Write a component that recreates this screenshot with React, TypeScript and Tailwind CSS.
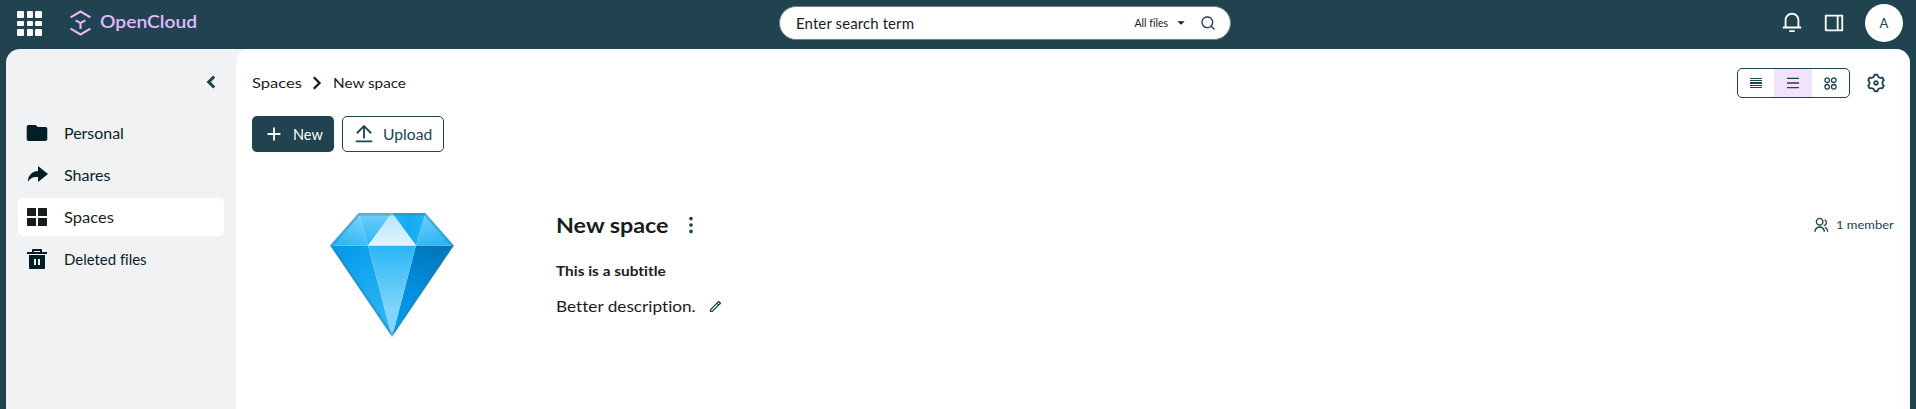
import React from 'react';
import {
  RiArrowDropDownFill,
  RiArrowLeftSLine,
  RiArrowRightSLine,
  RiAddLine,
  RiDeleteBin5Fill,
  RiGroupLine,
  RiLayoutGridFill,
  RiLayoutRightLine,
  RiMenuLine,
  RiMore2Fill,
  RiNotification3Line,
  RiPencilLine,
  RiSearchLine,
  RiSettings3Line,
  RiShareForwardFill,
  RiUploadLine,
} from 'react-icons/ri';

function AppGrid() {
  return (
    <span className="grid size-[25px] grid-cols-[7px_6px_7px] grid-rows-[7px_5px_7px] justify-between content-between">
      {Array.from({ length: 9 }, (_, i) => (
        <span key={i} className="rounded-[1px] bg-white" />
      ))}
    </span>
  );
}

function FolderIcon({ className }: { className?: string }) {
  return (
    <svg viewBox="0 0 24 24" fill="currentColor" className={className}>
      <path d="M3.5 4H10.5L12.8 6H20.5A1.8 1.8 0 0 1 22.3 7.8V18.2A1.8 1.8 0 0 1 20.5 20H3.5A1.8 1.8 0 0 1 1.7 18.2V5.8A1.8 1.8 0 0 1 3.5 4Z" />
    </svg>
  );
}

function Logo() {
  return (
    <span className="flex items-center text-[#e2baff]">
      <svg width="21" height="26" viewBox="0 0 21 26" fill="none" stroke="currentColor" strokeWidth="2.1">
        <path d="M.6 7.4 10.5 1.5 20.4 7.4" />
        <path d="M.6 18.6 10.5 24.5 20.4 18.6" />
        <path d="M5.7 10.3 10.5 13.1 15.3 10.3M10.5 13V19" />
      </svg>
      <span className="-mt-px ml-[9px] origin-left scale-x-[1.1] text-[17.5px] font-semibold">OpenCloud</span>
    </span>
  );
}

function Gem() {
  return (
    <svg width="124" height="124" viewBox="0 0 124 124">
      <defs>
        <linearGradient id="left" x1="0" y1="0" x2="0.5" y2="1">
          <stop offset="0" stopColor="#0398e8" />
          <stop offset="1" stopColor="#29b6f6" />
        </linearGradient>
        <linearGradient id="right" x1="0.6" y1="0" x2="0.3" y2="1">
          <stop offset="0" stopColor="#0277bd" />
          <stop offset="0.55" stopColor="#0290df" />
          <stop offset="1" stopColor="#03a0ef" />
        </linearGradient>
        <linearGradient id="middle" x1="0" y1="0" x2="0" y2="1">
          <stop offset="0" stopColor="#29b6f6" />
          <stop offset="0.7" stopColor="#81d4fa" />
        </linearGradient>
        <linearGradient id="crown" x1="0" y1="0" x2="0" y2="1">
          <stop offset="0" stopColor="#b3e5fc" />
          <stop offset="1" stopColor="#e1f5fe" />
        </linearGradient>
        <linearGradient id="wingLeft" x1="0.8" y1="0" x2="0.3" y2="1">
          <stop offset="0" stopColor="#81d4fa" />
          <stop offset="1" stopColor="#29b6f6" />
        </linearGradient>
        <linearGradient id="wingRight" x1="0.2" y1="0" x2="0.5" y2="1">
          <stop offset="0" stopColor="#73d0fa" />
          <stop offset="1" stopColor="#29b6f6" />
        </linearGradient>
        <linearGradient id="topLeft" x1="0" y1="0" x2="0" y2="1">
          <stop offset="0" stopColor="#71cef8" />
          <stop offset="1" stopColor="#29b6f6" />
        </linearGradient>
        <linearGradient id="topRight" x1="0" y1="0" x2="1" y2="0">
          <stop offset="0" stopColor="#2db7f5" />
          <stop offset="0.5" stopColor="#12a9f1" />
          <stop offset="1" stopColor="#29b6f6" />
        </linearGradient>
        <clipPath id="outline">
          <path d="M28.5 0H95.5L124 32.5 62 124 0 32.5Z" />
        </clipPath>
      </defs>
      <g clipPath="url(#outline)">
        <path d="M0 32.5H38L62 124Z" fill="url(#left)" />
        <path d="M86 32.5H124L62 124Z" fill="url(#right)" />
        <path d="M38 32.5H86L62 124Z" fill="url(#middle)" />
        <path d="M28.5 0 38 32.5H0Z" fill="url(#wingLeft)" />
        <path d="M95.5 0 86 32.5H124Z" fill="url(#wingRight)" />
        <path d="M28.5 0H62L38 32.5Z" fill="url(#topLeft)" />
        <path d="M62 0H95.5L86 32.5Z" fill="url(#topRight)" />
        <path d="M62 0 86 32.5H38Z" fill="url(#crown)" />
        <path d="M28.5 0H95.5L124 32.5 62 124 0 32.5Z" fill="none" stroke="#2f7fa5" strokeOpacity="0.4" strokeWidth="5" />
      </g>
    </svg>
  );
}

const navigation = [
  { label: 'Personal', icon: FolderIcon, stretch: 'scale-x-[1.1]' },
  { label: 'Shares', icon: RiShareForwardFill, stretch: 'scale-x-[1.11]' },
  { label: 'Spaces', icon: RiLayoutGridFill, active: true, stretch: 'scale-x-[1.14]' },
  { label: 'Deleted files', icon: RiDeleteBin5Fill, stretch: 'scale-x-[1.03]' },
];

function TopBar() {
  return (
    <header className="flex h-[49px] items-start pt-[4px]">
      <div className="flex h-[38px] w-[779px] items-center gap-7 pl-[17px]">
        <AppGrid />
        <Logo />
      </div>
      <div className="mt-[2px] flex h-[34px] w-[452px] items-center rounded-full border border-[#7b7f82] bg-white pr-[14px] pl-4 text-[#191c1d]">
        <span className="flex-1 text-[15px] tracking-[0.1px]">Enter search term</span>
        <span className="mt-px text-[10.5px]">All files</span>
        <RiArrowDropDownFill className="ml-[2px] size-[22px]" />
        <RiSearchLine className="ml-[8px] size-[16px] text-[#20434f]" />
      </div>
      <div className="flex h-[38px] flex-1 items-center justify-end pr-[13px] text-white">
        <RiNotification3Line className="-mt-[3px] size-[22px]" />
        <RiLayoutRightLine className="ml-[20px] size-[22px]" />
        <span className="ml-5 flex size-[38px] items-center justify-center rounded-full bg-white pt-px text-[13px] text-[#20434f]">A</span>
      </div>
    </header>
  );
}

function Sidebar() {
  return (
    <aside className="flex w-[230px] shrink-0 flex-col pr-3 pl-3">
      <div className="flex h-[65px] items-center justify-end pr-[2px] text-[#20434f]">
        <RiArrowLeftSLine className="size-[22px] stroke-current stroke-[1.2]" />
      </div>
      <nav className="flex flex-col gap-1">
        {navigation.map(({ label, icon: Icon, active, stretch }) => (
          <a key={label} className={`flex h-[38px] items-center rounded-[5px] pl-[7px] ${active ? 'bg-white text-[#191c1d]' : 'text-[#041e26]'}`}>
            <Icon className="size-[24px]" />
            <span className={`mt-px ml-[15px] origin-left text-[14.5px] ${stretch}`}>{label}</span>
          </a>
        ))}
      </nav>
    </aside>
  );
}

function ViewToggle() {
  return (
    <div className="flex h-[30px] w-[113px] items-stretch overflow-hidden rounded-[5px] border border-[#20434f]">
      <span className="flex w-[36px] items-center justify-center">
        <svg width="12" height="10" viewBox="0 0 12 10" fill="currentColor">
          <path d="M0 0h12v1H0zM0 2h12v1H0zM0 4h12v2H0zM0 7h12v1H0zM0 9h12v1H0z" />
        </svg>
      </span>
      <span className="flex w-[38px] items-center justify-center bg-[#f2e3fc]"><RiMenuLine className="size-4" /></span>
      <span className="flex flex-1 items-center justify-center">
        <svg width="13" height="13" viewBox="0 0 13 13" fill="none" stroke="currentColor" strokeWidth="1.3">
          <circle cx="3.2" cy="3.2" r="2.3" />
          <circle cx="9.8" cy="3.2" r="2.3" />
          <circle cx="3.2" cy="9.8" r="2.3" />
          <circle cx="9.8" cy="9.8" r="2.3" />
        </svg>
      </span>
    </div>
  );
}

function Toolbar() {
  return (
    <div className="flex h-[30px] items-center justify-between text-[#20434f]">
      <div className="-mt-px flex items-center text-[14px] text-[#191c1d]">
        <span className="w-[50px] origin-left scale-x-[1.18]">Spaces</span>
        <RiArrowRightSLine className="mr-[4px] ml-[3px] size-[24px] stroke-current stroke-[0.4]" />
        <span className="origin-left scale-x-[1.09]">New space</span>
      </div>
      <div className="mr-[7px] flex items-center gap-[15px]">
        <ViewToggle />
        <RiSettings3Line className="size-[22px]" />
      </div>
    </div>
  );
}

function SpaceHeader() {
  return (
    <section className="mt-[61px] flex">
      <div className="ml-[78px] w-[226px]"><Gem /></div>
      <div className="-mt-px flex flex-1 flex-col text-[#191c1d]">
        <div className="flex h-[25px] items-center">
          <h1 className="w-[113px] origin-left scale-x-[1.11] text-[21px] font-bold whitespace-nowrap">New space</h1>
          <RiMore2Fill className="ml-[11px] size-[22px] text-[#20434f]" />
          <span className="ml-auto flex items-center text-[#20434f]">
            <RiGroupLine className="size-4" />
            <span className="ml-[7px] w-[58px] origin-left scale-x-[1.08] pt-px text-[12px] whitespace-nowrap">1 member</span>
          </span>
        </div>
        <p className="mt-[24px] h-5 origin-left scale-x-[1.1] self-start text-[14px] leading-5 font-bold">This is a subtitle</p>
        <p className="mt-[13px] flex h-6 items-center text-[16px]">
          <span className="w-[140px] origin-left scale-x-[1.075] whitespace-nowrap">Better description.</span>
          <RiPencilLine className="ml-3 size-[15px] text-[#20434f]" />
        </p>
      </div>
    </section>
  );
}

export default function App() {
  return (
    <div className="flex h-[409px] w-full flex-col overflow-hidden bg-[#20434f] font-['Lato',sans-serif] [font-variant-ligatures:none]">
      <TopBar />
      <div className="mr-[6px] ml-[6px] flex flex-1 overflow-hidden rounded-t-[14px] bg-[#f1f2f4]">
        <Sidebar />
        <main className="flex-1 rounded-t-[14px] bg-white pt-[19px] pr-4 pl-4">
          <Toolbar />
          <div className="mt-[18px] flex gap-2 text-[14.5px]">
            <button className="flex h-[36px] w-[82px] items-center rounded-[5px] bg-[#20434f] pl-[11px] text-white">
              <RiAddLine className="size-[22px]" />
              <span className="mt-px ml-[8px] origin-left">New</span>
            </button>
            <button className="flex h-[36px] w-[102px] items-center rounded-[5px] border border-[#20434f] pl-[10px] text-[#20434f]">
              <RiUploadLine className="size-[22px]" />
              <span className="mt-px ml-[8px] origin-left scale-x-[1.08]">Upload</span>
            </button>
          </div>
          <SpaceHeader />
        </main>
      </div>
    </div>
  );
}
